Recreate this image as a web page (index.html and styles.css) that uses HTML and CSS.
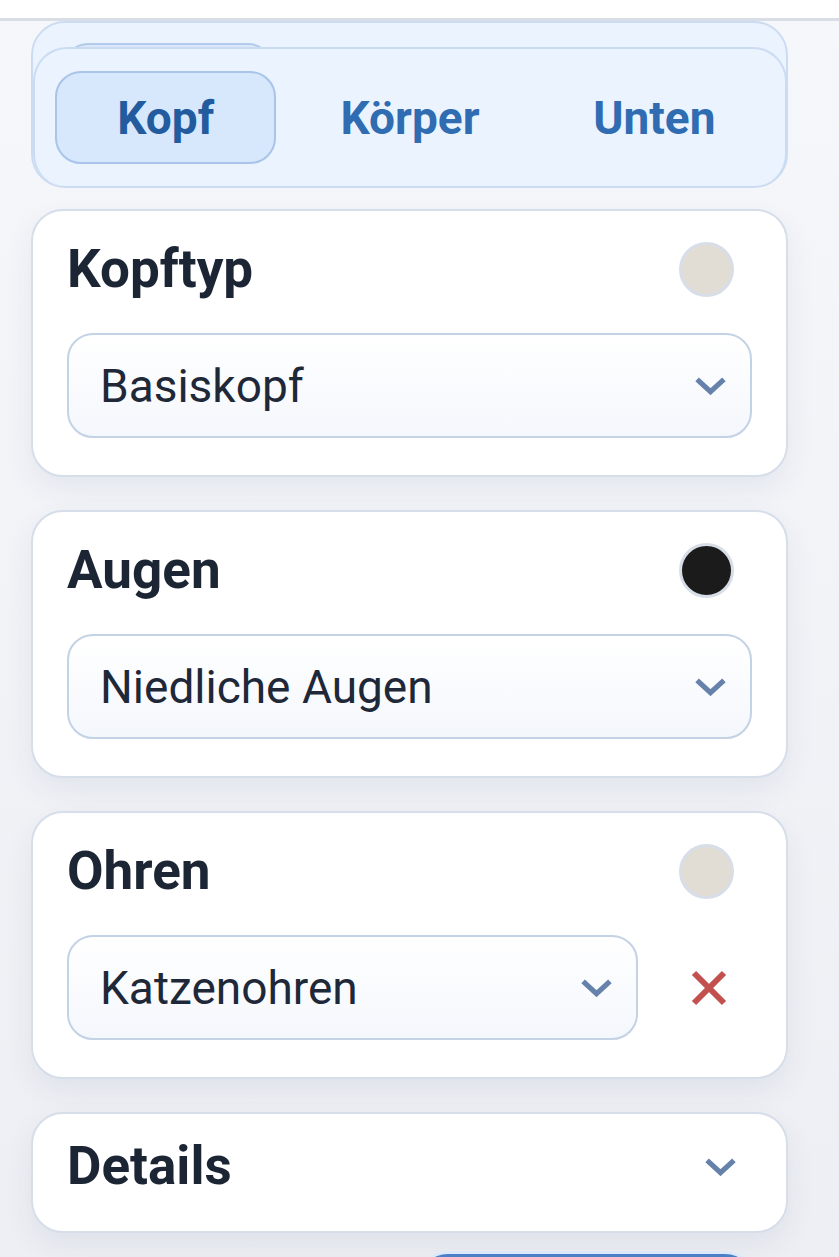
FILE: index.html
```html
<!DOCTYPE html>
<html lang="de">
<head>
  <meta charset="UTF-8" />
  <meta name="viewport" content="width=device-width, initial-scale=1.0"/>
  <title>Figur gestalten</title>
  <link rel="stylesheet" href="styles.css">
</head>
<body>
  <div class="topbar"></div>

  <main class="page">
    <!-- Tab bar (sticky copy over the original) -->
    <div class="tabs-wrap">
      <div class="ghost-pill"></div>
      <nav class="tabs">
        <button class="tab active">Kopf</button>
        <button class="tab">Körper</button>
        <button class="tab">Unten</button>
      </nav>
    </div>

    <section class="card">
      <div class="card-head">
        <h2>Kopftyp</h2>
        <span class="swatch swatch-cream"></span>
      </div>
      <div class="select">
        <span>Basiskopf</span>
        <svg class="chevron" viewBox="0 0 32 18"><polyline points="3,3 16,15 29,3"/></svg>
      </div>
    </section>

    <section class="card">
      <div class="card-head">
        <h2>Augen</h2>
        <span class="swatch swatch-black"></span>
      </div>
      <div class="select">
        <span>Niedliche Augen</span>
        <svg class="chevron" viewBox="0 0 32 18"><polyline points="3,3 16,15 29,3"/></svg>
      </div>
    </section>

    <section class="card">
      <div class="card-head">
        <h2>Ohren</h2>
        <span class="swatch swatch-cream"></span>
      </div>
      <div class="select-row">
        <div class="select">
          <span>Katzenohren</span>
          <svg class="chevron" viewBox="0 0 32 18"><polyline points="3,3 16,15 29,3"/></svg>
        </div>
        <button class="remove" aria-label="Entfernen">
          <svg viewBox="0 0 40 40"><path d="M5 5 L35 35 M35 5 L5 35"/></svg>
        </button>
      </div>
    </section>

    <section class="card card-collapsed">
      <div class="card-head">
        <h2>Details</h2>
        <svg class="chevron chevron-head" viewBox="0 0 32 18"><polyline points="3,3 16,15 29,3"/></svg>
      </div>
    </section>

    <div class="actions">
      <button class="primary" aria-label="Speichern"></button>
    </div>
  </main>
</body>
</html>
```

FILE: styles.css
```css
:root {
  --bg: #f3f5f9;
  --text: #1e2736;
  --tab-bg: #eaf3fe;
  --tab-border: #cbdcf2;
  --tab-text: #2f6cb2;
  --card-border: #d6dee9;
  --select-border: #c3d2e5;
  --chevron: #6681aa;
  --danger: #c2504e;
}

* {
  box-sizing: border-box;
  margin: 0;
  padding: 0;
  font-family: Roboto, "Liberation Sans", sans-serif;
}

body {
  background: linear-gradient(to bottom, #f5f7fb, #eceef3);
  color: var(--text);
  min-height: 100vh;
  overflow: hidden;
}

.topbar {
  height: 21px;
  background: #fff;
  border-bottom: 3px solid #d9dee6;
}

.page {
  width: 757px;
  margin-left: 31px;
  display: flex;
  flex-direction: column;
  gap: 33px;
}

/* tabs */
.tabs-wrap {
  position: relative;
  margin-top: 0;
  margin-bottom: -12px;
  padding-top: 24px;
  border: 2px solid var(--tab-border);
  border-radius: 34px;
  background: var(--tab-bg);
}

.ghost-pill {
  position: absolute;
  top: 20px;
  left: 31px;
  width: 208px;
  height: 60px;
  border: 2px solid #b3cbea;
  border-radius: 24px;
  background: #dbe8fb;
}

.tabs {
  position: relative;
  margin: 0 -1px 0 0;
  height: 139px;
  display: grid;
  grid-template-columns: repeat(3, 1fr);
  gap: 23px;
  align-items: center;
  padding: 0 20px 0 20px;
  border: 2px solid var(--tab-border);
  border-bottom: none;
  border-radius: 34px 34px 32px 32px;
  background: #ebf3fe;
}

.tab {
  height: 93px;
  border: 2px solid transparent;
  border-radius: 26px;
  background: none;
  color: var(--tab-text);
  font-size: 46px;
  font-weight: 700;
  cursor: pointer;
}

.tab.active {
  background: #d7e7fc;
  border-color: #a8c4e8;
  color: #225b9e;
}

/* cards */
.card {
  background: #fff;
  border: 2px solid var(--card-border);
  border-radius: 32px;
  padding: 20px 34px 37px;
  box-shadow: 0 12px 30px rgba(40, 60, 100, 0.07);
}

.card-head {
  height: 76px;
  display: flex;
  align-items: center;
  justify-content: space-between;
  margin-bottom: 26px;
}

.card-head h2 {
  font-size: 53px;
  font-weight: 700;
  color: #1c2534;
}

.swatch {
  width: 55px;
  height: 55px;
  border-radius: 50%;
  border: 3px solid #d8dee8;
  margin-right: 18px;
}

.swatch-cream {
  background: #e1ddd5;
}

.swatch-black {
  background: #1b1b1b;
}

.select {
  height: 105px;
  display: flex;
  align-items: center;
  justify-content: space-between;
  padding: 0 23px 0 31px;
  border: 2px solid var(--select-border);
  border-radius: 26px;
  background: linear-gradient(to bottom, #ffffff, #f4f7fc);
  font-size: 46px;
  color: #1e2838;
}

.chevron {
  width: 33px;
  height: 19px;
  fill: none;
  stroke: var(--chevron);
  stroke-width: 5;
}

.select-row {
  display: flex;
  align-items: center;
  gap: 51px;
}

.select-row .select {
  width: 571px;
}

.remove {
  width: 40px;
  height: 40px;
  border: none;
  background: none;
}

.remove svg {
  width: 40px;
  height: 40px;
  fill: none;
  stroke: var(--danger);
  stroke-width: 6;
}

.card-collapsed {
  padding: 14px 34px 27px;
}

.card-collapsed .card-head {
  margin-bottom: 0;
}

.chevron-head {
  margin-right: 15px;
}

.actions {
  display: flex;
  justify-content: flex-end;
  margin-top: -12px;
  padding-right: 33px;
}

.primary {
  width: 337px;
  height: 90px;
  border: none;
  border-radius: 30px;
  background: linear-gradient(to bottom, #4a80c8, #3d70b8);
  box-shadow: 0 0 0 3px #dce9fb;
}
```
